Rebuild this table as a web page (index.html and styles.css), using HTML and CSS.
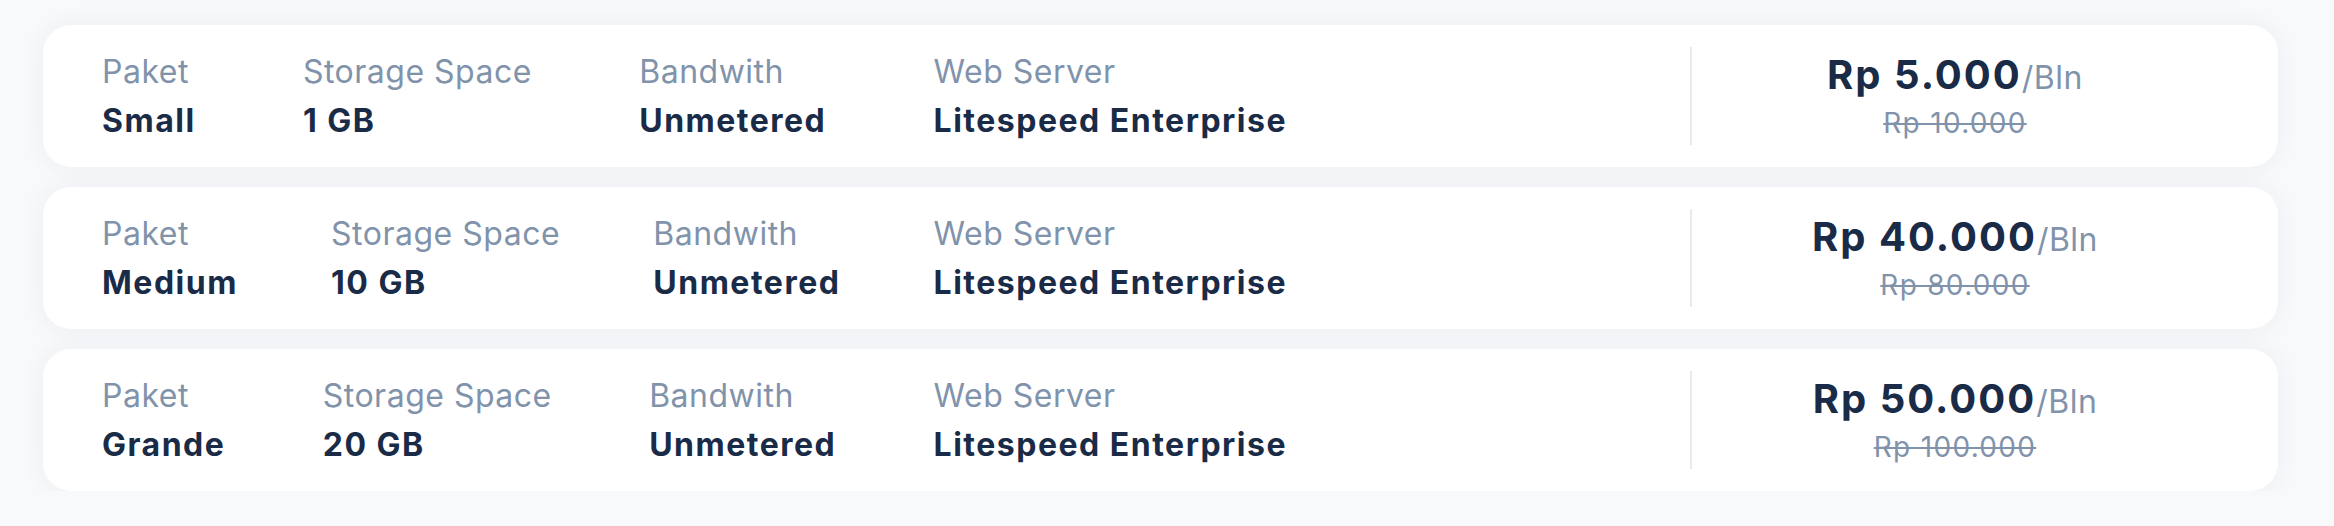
FILE: index.html
```html
<!DOCTYPE html>
<html lang="en">
<head>
    <meta charset="UTF-8">
    <meta name="viewport" content="width=device-width, initial-scale=1.0">
    <title>Paket Hosting</title>
    <link rel="stylesheet" href="styles.css">
</head>
<body>
    <div class="plan-list">
        <div class="plan-card">
            <div class="plan-specs">
                <div class="spec">
                    <span class="spec-label">Paket</span>
                    <span class="spec-value">Small</span>
                </div>
                <div class="spec">
                    <span class="spec-label">Storage Space</span>
                    <span class="spec-value">1 GB</span>
                </div>
                <div class="spec">
                    <span class="spec-label">Bandwith</span>
                    <span class="spec-value">Unmetered</span>
                </div>
                <div class="spec">
                    <span class="spec-label">Web Server</span>
                    <span class="spec-value">Litespeed Enterprise</span>
                </div>
            </div>
            <div class="plan-price">
                <div class="price-now">Rp 5.000<span class="price-unit">/Bln</span></div>
                <div class="price-old">Rp 10.000</div>
            </div>
        </div>

        <div class="plan-card">
            <div class="plan-specs">
                <div class="spec">
                    <span class="spec-label">Paket</span>
                    <span class="spec-value">Medium</span>
                </div>
                <div class="spec">
                    <span class="spec-label">Storage Space</span>
                    <span class="spec-value">10 GB</span>
                </div>
                <div class="spec">
                    <span class="spec-label">Bandwith</span>
                    <span class="spec-value">Unmetered</span>
                </div>
                <div class="spec">
                    <span class="spec-label">Web Server</span>
                    <span class="spec-value">Litespeed Enterprise</span>
                </div>
            </div>
            <div class="plan-price">
                <div class="price-now">Rp 40.000<span class="price-unit">/Bln</span></div>
                <div class="price-old">Rp 80.000</div>
            </div>
        </div>

        <div class="plan-card">
            <div class="plan-specs">
                <div class="spec">
                    <span class="spec-label">Paket</span>
                    <span class="spec-value">Grande</span>
                </div>
                <div class="spec">
                    <span class="spec-label">Storage Space</span>
                    <span class="spec-value">20 GB</span>
                </div>
                <div class="spec">
                    <span class="spec-label">Bandwith</span>
                    <span class="spec-value">Unmetered</span>
                </div>
                <div class="spec">
                    <span class="spec-label">Web Server</span>
                    <span class="spec-value">Litespeed Enterprise</span>
                </div>
            </div>
            <div class="plan-price">
                <div class="price-now">Rp 50.000<span class="price-unit">/Bln</span></div>
                <div class="price-old">Rp 100.000</div>
            </div>
        </div>
    </div>
</body>
</html>
```

FILE: styles.css
```css
* {
    box-sizing: border-box;
    margin: 0;
    padding: 0;
    font-family: 'Inter', 'Open Sans', sans-serif;
}

body {
    background-color: #f8f9fb;
    padding: 25px 56px 0 43px;
}

.plan-list {
    display: flex;
    flex-direction: column;
    gap: 20px;
}

.plan-card {
    display: grid;
    grid-template-columns: 1185px 1fr 528px;
    background: #fff;
    border-radius: 28px;
    padding: 22px 60px 22px 59px;
    box-shadow: 0 0 24px rgba(40, 55, 90, 0.06);
}

.plan-specs {
    display: flex;
    justify-content: space-between;
}

.spec {
    display: flex;
    flex-direction: column;
}

.spec-label {
    font-size: 32px;
    line-height: 49px;
    letter-spacing: 0.5px;
    color: #8193ab;
}

.spec-value {
    font-size: 32px;
    line-height: 49px;
    font-weight: 700;
    letter-spacing: 1.5px;
    color: #1a2b47;
}

.plan-price {
    grid-column: 3;
    display: flex;
    flex-direction: column;
    align-items: center;
    padding-top: 2px;
    border-left: 2px solid #e7ebf1;
}

.price-now {
    font-size: 40px;
    line-height: 52px;
    font-weight: 700;
    letter-spacing: 2px;
    color: #1a2b47;
}

.price-unit {
    font-size: 32px;
    line-height: 1;
    font-weight: 400;
    letter-spacing: 0.5px;
    color: #8193ab;
}

.price-old {
    font-size: 28px;
    line-height: 44px;
    letter-spacing: 1.3px;
    color: #8193ab;
    text-decoration: line-through;
    text-decoration-thickness: 2px;
}
```
